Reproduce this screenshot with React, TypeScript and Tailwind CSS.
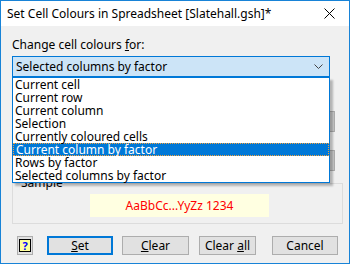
import React from "react";

const font = { fontFamily: '"Segoe UI", "Noto Sans", "Open Sans", sans-serif' };

const items = [
  "Current cell",
  "Current row",
  "Current column",
  "Selection",
  "Currently coloured cells",
  "Current column by factor",
  "Rows by factor",
  "Selected columns by factor",
];

const Btn = ({ children, w, primary }: { children: React.ReactNode; w: string; primary?: boolean }) => (
  <div
    className={`${w} h-[19px] flex items-center justify-center bg-[#e1e1e1] text-[12px] text-black ${
      primary ? "border-2 border-[#0078d7]" : "border border-[#adadad]"
    }`}
  >
    {children}
  </div>
);

const App = () => {
  return (
    <div className="w-[350px] h-[264px] bg-white" style={font}>
      <div className="w-full h-full border border-[#1883d7] flex flex-col">
        {/* title bar */}
        <div className="h-[25px] bg-white flex items-center justify-between pl-[6px] pr-[14px] shrink-0">
          <span className="text-[12px] text-black leading-none">Set Cell Colours in Spreadsheet [Slatehall.gsh]*</span>
          <svg width="11" height="11" viewBox="0 0 11 11">
            <path d="M0.5 0.5 L10.5 10.5 M10.5 0.5 L0.5 10.5" stroke="#000" strokeWidth="1" />
          </svg>
        </div>

        {/* body */}
        <div className="relative flex-1 bg-[#f0f0f0] px-[11px] flex flex-col">
          <div className="mt-[11px] text-[12px] leading-[16px] text-black">
            Change cell colours <span className="underline">f</span>or:
          </div>
          <div className="mt-[3px] w-[318px] h-[21px] bg-[#cce4f7] border border-[#0078d7] flex items-center justify-between pl-[3px] pr-[6px]">
            <span className="text-[12px] text-black leading-none">Selected columns by factor</span>
            <svg width="9" height="5" viewBox="0 0 9 5">
              <path d="M0.5 0.5 L4.5 4.5 L8.5 0.5" stroke="#444" strokeWidth="1" fill="none" />
            </svg>
          </div>

          {/* area hidden under the open list */}
          <div className="h-[106px] flex justify-end">
            <div className="flex flex-col pt-[34px] gap-[18px] mr-[3px]">
              <div className="w-[14px] h-[21px] bg-[#cccccc] border border-[#adadad]" />
              <div className="w-[14px] h-[21px] bg-[#cccccc] border border-[#adadad]" />
            </div>
          </div>

          {/* sample group */}
          <div className="w-[331px] h-[41px] border border-[#dcdcdc] relative flex items-center">
            <span className="absolute left-[7px] -top-[7px] text-[12px] leading-[12px] text-black bg-[#f0f0f0] px-[1px]">Sample</span>
            <div className="ml-[77px] mt-[4px] w-[179px] h-[23px] bg-[#ffffe1] flex items-center justify-center">
              <span className="text-[12px] text-[#ff0000]">AaBbCc...YyZz 1234</span>
            </div>
          </div>

          {/* buttons */}
          <div className="mt-[12px] flex items-center">
            <div className="ml-[5px] w-[18px] h-[19px] bg-[#e1e1e1] border border-[#adadad] flex items-center justify-center">
              <div className="w-[12px] h-[13px] border border-black bg-[#ffff9c] flex items-center justify-center text-[11px] font-bold leading-none text-[#0000ff]">
                ?
              </div>
            </div>
            <div className="ml-[14px]">
              <Btn w="w-[66px]" primary>
                <span><span className="underline">S</span>et</span>
              </Btn>
            </div>
            <div className="ml-[9px]">
              <Btn w="w-[67px]">
                <span><span className="underline">C</span>lear</span>
              </Btn>
            </div>
            <div className="ml-[10px]">
              <Btn w="w-[57px]">
                <span>Clear <span className="underline">a</span>ll</span>
              </Btn>
            </div>
            <div className="ml-[16px]">
              <Btn w="w-[66px]">Cancel</Btn>
            </div>
          </div>

          {/* open dropdown list */}
          <div className="absolute left-[11px] top-[51px] w-[318px] h-[106px] bg-white border border-[#0078d7] shadow-[3px_3px_2px_rgba(0,0,0,0.25)]">
            {items.map((t) => (
              <div
                key={t}
                className={`h-[13px] flex items-center pl-[2px] text-[12px] leading-[13px] ${
                  t === "Current column by factor"
                    ? "bg-[#0078d7] text-white border border-dotted border-[#f5a23c] pl-[1px]"
                    : "text-black"
                }`}
              >
                {t}
              </div>
            ))}
          </div>
        </div>
      </div>
    </div>
  );
};

export default App;
